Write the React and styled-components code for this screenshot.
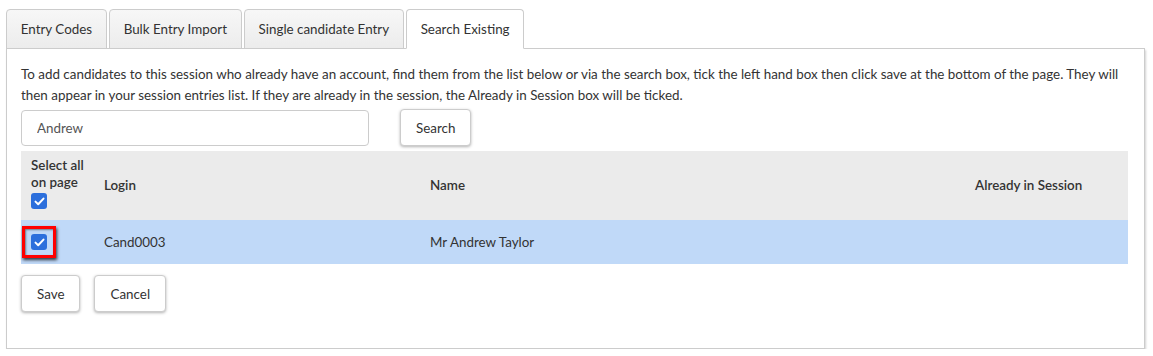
import React from "react";
import styled, { createGlobalStyle } from "styled-components";

const Global = createGlobalStyle`
  html, body { margin: 0; padding: 0; background: #fff; }
  body { font-family: "Source Sans Pro", Lato, "Liberation Sans", sans-serif; font-size: 13.4px; color: #333; }
  * { box-sizing: border-box; }
`;

const Page = styled.div`
  padding: 9px 8px 0 6px;
`;

const TabBar = styled.div`
  display: flex;
  gap: 2px;
  position: relative;
  z-index: 1;
  margin-bottom: -1px;
`;

const Tab = styled.div`
  height: 40px;
  padding: 0 13.75px;
  display: flex;
  align-items: center;
  border: 1px solid #ccc;
  border-bottom: ${(p) => (p.$active ? "1px solid #fff" : "1px solid #ccc")};
  border-radius: 4px 4px 0 0;
  background: ${(p) => (p.$active ? "#fff" : "linear-gradient(#f7f7f7, #ececec)")};
  color: #333;
  white-space: nowrap;
`;

const Panel = styled.div`
  border: 1px solid #ccc;
  box-shadow: 1px 2px 2px rgba(0, 0, 0, 0.18);
  padding: 15px 16px 36px 14px;
  background: #fff;
`;

const Intro = styled.p`
  margin: 0 0 3px;
  line-height: 21px;
`;

const SearchRow = styled.div`
  display: flex;
  align-items: center;
  gap: 31px;
  margin-bottom: 5px;
`;

const TextInput = styled.input`
  width: 348px;
  height: 36px;
  border: 1px solid #ccc;
  border-radius: 4px;
  padding: 0 15px;
  font: inherit;
  color: #555;
  outline: none;
`;

const Button = styled.button`
  height: 37px;
  padding: 0 15px;
  background: #fff;
  border: 1px solid #ccc;
  border-radius: 4px;
  box-shadow: 0 1px 3px rgba(0, 0, 0, 0.3);
  font: inherit;
  color: #333;
  cursor: pointer;
`;

const Table = styled.table`
  width: 100%;
  border-collapse: collapse;
  table-layout: fixed;
`;

const HeadRow = styled.tr`
  background: #ebebeb;
  height: 69px;
`;

const BodyRow = styled.tr`
  background: #c0d9f8;
  height: 44px;
`;

const Th = styled.th`
  text-align: left;
  font-weight: 600;
  color: #333;
  padding: 5px 10px;
  vertical-align: middle;
  line-height: 17px;
  width: ${(p) => p.$w}px;
`;

const Td = styled.td`
  padding: 0 10px;
  vertical-align: middle;
  color: #333;
`;

const CheckCell = styled(Td)`
  padding: 0 0 0 1px;
`;

const Box = styled.span`
  display: inline-flex;
  align-items: center;
  justify-content: center;
  width: 16px;
  height: 16px;
  border-radius: 3px;
  background: #2c6fdc;
  vertical-align: middle;
`;

const Highlight = styled.span`
  display: inline-flex;
  padding: 5px 6px;
  border: 3px solid #f00;
  box-shadow: 1px 2px 3px rgba(0, 0, 0, 0.75), inset 1px 1px 2px rgba(0, 0, 0, 0.45);
`;

const HeadLabel = styled.div`
  margin-bottom: 2px;
`;

const HeadCheck = styled.div`
  margin-bottom: 5px;
  line-height: 0;
`;

const Actions = styled.div`
  display: flex;
  gap: 14px;
  margin-top: 11px;
`;

function Check() {
  return (
    <Box>
      <svg width="11" height="9" viewBox="0 0 11 9">
        <path d="M1.5 4.6 L4.2 7.2 L9.5 1.6" fill="none" stroke="#fff" strokeWidth="2" strokeLinecap="round" strokeLinejoin="round" />
      </svg>
    </Box>
  );
}

export default function App() {
  return (
    <>
      <Global />
      <Page>
        <TabBar>
          <Tab>Entry Codes</Tab>
          <Tab>Bulk Entry Import</Tab>
          <Tab>Single candidate Entry</Tab>
          <Tab $active>Search Existing</Tab>
        </TabBar>
        <Panel>
          <Intro>
            To add candidates to this session who already have an account, find them from the list below or via the search box, tick the left hand box then click save at the bottom of the page. They will then appear in your session entries list. If they are already in the session, the Already in Session box will be ticked.
          </Intro>
          <SearchRow>
            <TextInput defaultValue="Andrew" />
            <Button>Search</Button>
          </SearchRow>
          <Table>
            <thead>
              <HeadRow>
                <Th $w={73}>
                  <HeadLabel>Select all on page</HeadLabel>
                  <HeadCheck>
                    <Check />
                  </HeadCheck>
                </Th>
                <Th $w={326}>Login</Th>
                <Th $w={545}>Name</Th>
                <Th>Already in Session</Th>
              </HeadRow>
            </thead>
            <tbody>
              <BodyRow>
                <CheckCell>
                  <Highlight>
                    <Check />
                  </Highlight>
                </CheckCell>
                <Td>Cand0003</Td>
                <Td>Mr Andrew Taylor</Td>
                <Td />
              </BodyRow>
            </tbody>
          </Table>
          <Actions>
            <Button>Save</Button>
            <Button>Cancel</Button>
          </Actions>
        </Panel>
      </Page>
    </>
  );
}
